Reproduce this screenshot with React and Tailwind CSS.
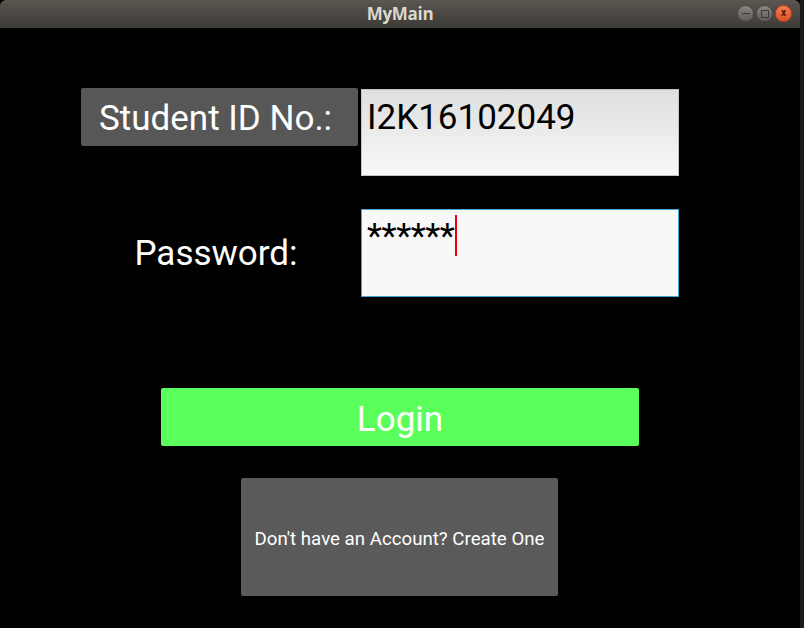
export default function App() {
  const roboto = { fontFamily: "Roboto, 'Noto Sans', sans-serif" };
  return (
    <div className="flex w-[804px] h-[628px] overflow-hidden bg-[#1a1a1a]">
      <div className="w-[800px] h-[628px] flex flex-col bg-black">
        {/* Title bar */}
        <div className="h-[28px] shrink-0 rounded-t-[6px] bg-gradient-to-b from-[#5a5650] to-[#3d3b37] flex items-center relative">
          <div className="flex-1 text-center text-[17px] font-bold text-[#dcd8cf] [font-family:'Open_Sans',sans-serif] tracking-[-0.3px] pb-[1px]">MyMain</div>
          <div className="absolute right-[8px] top-[5px] flex gap-[2px]">
            <div className="w-[17px] h-[17px] rounded-full bg-gradient-to-b from-[#8a8782] to-[#5f5c57] border border-[#4a4743] flex items-center justify-center">
              <div className="w-[8px] h-[1.5px] bg-[#3a3835]" />
            </div>
            <div className="w-[17px] h-[17px] rounded-full bg-gradient-to-b from-[#8a8782] to-[#5f5c57] border border-[#4a4743] flex items-center justify-center">
              <div className="w-[8px] h-[8px] border border-[#3a3835]" />
            </div>
            <div className="w-[17px] h-[17px] rounded-full bg-gradient-to-b from-[#f57a4e] to-[#e0501e] border border-[#b8441b] flex items-center justify-center text-[10px] leading-none text-[#4a1a08] font-bold pb-[1px]" style={roboto}>x</div>
          </div>
        </div>
        {/* Content */}
        <div className="flex-1 flex flex-col" style={roboto}>
          <div className="flex mt-[60px] ml-[81px]">
            <div className="w-[277px] h-[58px] bg-[#575757] rounded-[2px] text-white text-[35px] leading-none flex items-center pl-[18px] pt-[3px]">Student ID No.:</div>
            <div className="ml-[3px] mt-[1px] w-[318px] h-[87px] bg-gradient-to-b from-[#dfdfdf] to-[#f8f8f8] border border-[#c4c4c4] text-black text-[35px] leading-none pl-[5px] pt-[10px]">I2K16102049</div>
          </div>
          <div className="flex mt-[33px] ml-[81px]">
            <div className="w-[277px] h-[88px] text-white text-[35px] leading-none flex justify-center pt-[27px] pr-[7px]">Password:</div>
            <div className="ml-[3px] w-[318px] h-[88px] bg-[#f8f8f8] border border-[#41a6d6] text-black text-[35px] leading-none pl-[5px] pt-[9px] flex items-start">
              <span className="tracking-[-0.5px]">******</span>
              <div className="w-[2px] h-[41px] bg-red-600 -mt-[4px] ml-[1px] shrink-0" />
            </div>
          </div>
          <div className="mt-[91px] ml-[161px] w-[478px] h-[58px] bg-[#5bff5b] rounded-[2px] text-white text-[35px] leading-none flex items-center justify-center pt-[4px]">Login</div>
          <div className="mt-[32px] ml-[241px] w-[317px] h-[118px] bg-[#5a5a5a] rounded-[2px] text-white text-[18.7px] leading-none flex items-center justify-center pt-[4px]">Don't have an Account? Create One</div>
        </div>
      </div>
      <div className="w-[4px] h-[628px] bg-[#1c1c1c]" />
    </div>
  );
}
